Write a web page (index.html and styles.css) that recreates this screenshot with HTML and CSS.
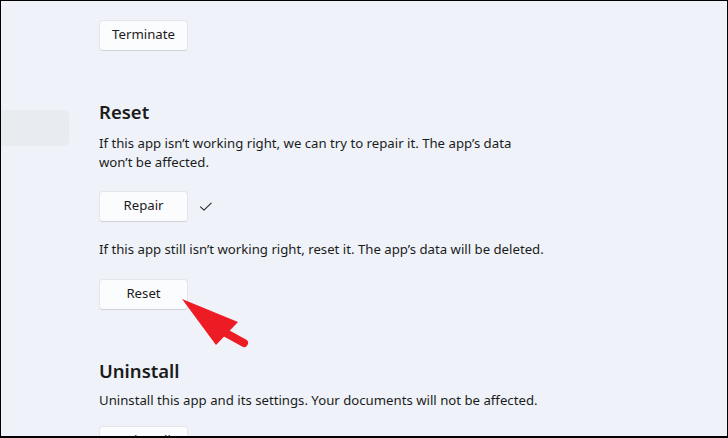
FILE: index.html
```html
<!DOCTYPE html>
<html lang="en">
<head>
<meta charset="utf-8">
<link rel="stylesheet" href="styles.css">
<title>App settings</title>
</head>
<body>
<div class="frame">
  <aside class="sidebar">
    <div class="nav-item"></div>
  </aside>
  <main class="content">
    <button class="btn btn-first">Terminate</button>

    <h2 class="heading heading-reset">Reset</h2>
    <p class="text text-reset">If this app isn’t working right, we can try to repair it. The app’s data won’t be affected.</p>
    <div class="btn-row">
      <button class="btn">Repair</button>
      <svg class="check" width="14" height="10" viewBox="0 0 14 10" aria-hidden="true">
        <path d="M1.5 4.8 L5 8.2 L12.2 1.2" fill="none" stroke="#2b2b2b" stroke-width="1.1" stroke-linecap="round" stroke-linejoin="round"/>
      </svg>
    </div>
    <p class="text text-reset2">If this app still isn’t working right, reset it. The app’s data will be deleted.</p>
    <button class="btn btn-reset">Reset</button>

    <h2 class="heading heading-uninstall">Uninstall</h2>
    <p class="text text-uninstall">Uninstall this app and its settings. Your documents will not be affected.</p>
    <button class="btn btn-uninstall">Uninstall</button>
  </main>

  <svg class="arrow" width="80" height="62" viewBox="175 290 80 62" aria-hidden="true">
    <line x1="224" y1="332" x2="244" y2="343" stroke="#ed1c24" stroke-width="8" stroke-linecap="round"/>
    <polygon points="182,299 238,322 216,345" fill="#ed1c24"/>
  </svg>
</div>
</body>
</html>
```

FILE: styles.css
```css
html, body {
  margin: 0;
  padding: 0;
}

body {
  background: #000;
}

.frame {
  position: relative;
  width: 728px;
  height: 438px;
  box-sizing: border-box;
  border-style: solid;
  border-color: #000;
  border-width: 1px 1px 2px 1px;
  background: #eff3f9;
  display: flex;
  overflow: hidden;
  font-family: "Noto Sans", "Open Sans", sans-serif;
  color: #1b1b1b;
}

.sidebar {
  width: 68px;
  flex: 0 0 68px;
  padding-top: 109px;
}

.nav-item {
  height: 36px;
  background: #e8ebf0;
  border-radius: 0 5px 5px 0;
}

.content {
  margin-left: 30px;
  padding-top: 19px;
  display: flex;
  flex-direction: column;
  align-items: flex-start;
}

.content > * {
  flex-shrink: 0;
}

.btn {
  width: 89px;
  height: 31px;
  box-sizing: border-box;
  background: #fbfcfe;
  border: 1px solid #e3e5e9;
  border-bottom-color: #cfd2d7;
  border-radius: 4px;
  font-family: inherit;
  font-size: 13.2px;
  color: #1b1b1b;
  padding: 0 0 1px 0;
  margin: 0;
  line-height: 1;
}

.heading {
  margin: 0;
  font-size: 18.5px;
  line-height: 28px;
  font-weight: 600;
}

.heading-reset {
  margin-top: 47px;
}

.heading-uninstall {
  margin-top: 47px;
}

.text {
  margin: 0;
  font-size: 13.2px;
  line-height: 19px;
  max-width: 440px;
}

.text-reset {
  margin-top: 8px;
}

.btn-row {
  display: flex;
  align-items: center;
  gap: 11px;
  margin-top: 19px;
}

.check {
  display: block;
  margin-top: 1px;
}

.text-reset2 {
  margin-top: 18px;
  max-width: none;
}

.btn-reset {
  margin-top: 20px;
}

.text-uninstall {
  margin-top: 6px;
  max-width: none;
}

.btn-uninstall {
  margin-top: 16px;
}

.arrow {
  position: absolute;
  left: 174px;
  top: 289px;
}
```
